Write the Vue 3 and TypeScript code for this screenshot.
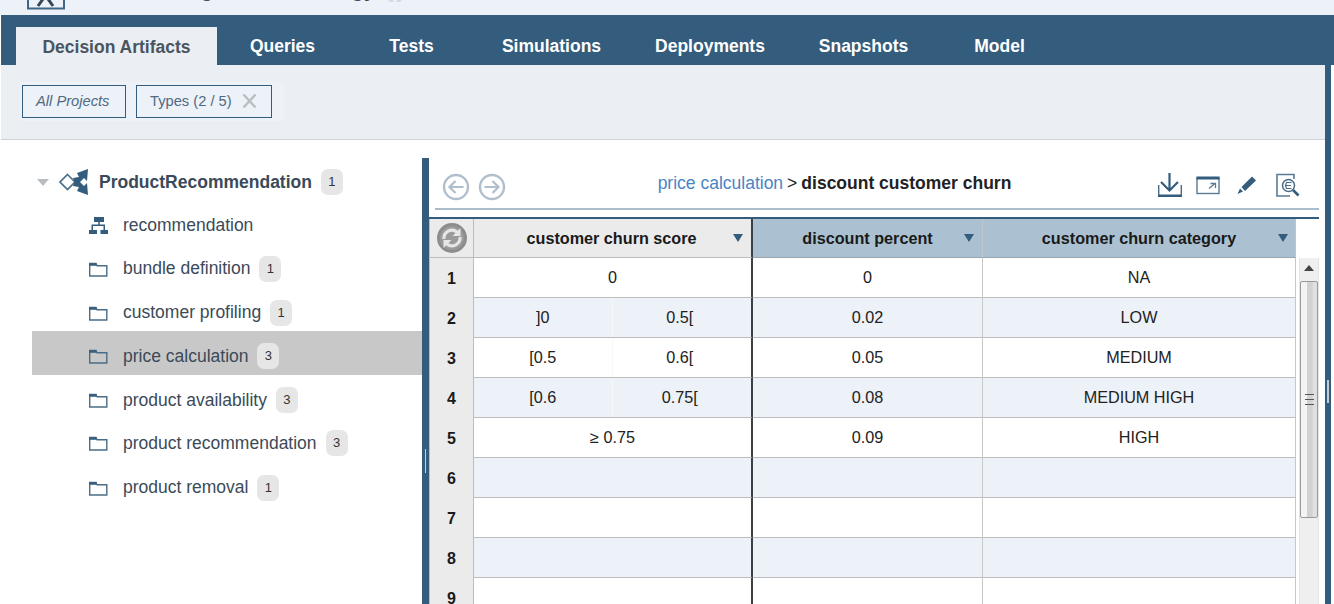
<script setup lang="ts">
interface TreeItem {
  name: string
  icon: 'tree' | 'folder'
  count?: number
  selected?: boolean
}

interface Row {
  id: number
  churn?: string
  low?: string
  high?: string
  discount?: string
  category?: string
}

const tabs = [
  { label: 'Queries', width: 131 },
  { label: 'Tests', width: 127 },
  { label: 'Simulations', width: 153 },
  { label: 'Deployments', width: 164 },
  { label: 'Snapshots', width: 143 },
  { label: 'Model', width: 129 },
]

const items: TreeItem[] = [
  { name: 'recommendation', icon: 'tree' },
  { name: 'bundle definition', icon: 'folder', count: 1 },
  { name: 'customer profiling', icon: 'folder', count: 1 },
  { name: 'price calculation', icon: 'folder', count: 3, selected: true },
  { name: 'product availability', icon: 'folder', count: 3 },
  { name: 'product recommendation', icon: 'folder', count: 3 },
  { name: 'product removal', icon: 'folder', count: 1 },
]

const rows: Row[] = [
  { id: 1, churn: '0', discount: '0', category: 'NA' },
  { id: 2, low: ']0', high: '0.5[', discount: '0.02', category: 'LOW' },
  { id: 3, low: '[0.5', high: '0.6[', discount: '0.05', category: 'MEDIUM' },
  { id: 4, low: '[0.6', high: '0.75[', discount: '0.08', category: 'MEDIUM HIGH' },
  { id: 5, churn: '≥ 0.75', discount: '0.09', category: 'HIGH' },
  { id: 6 },
  { id: 7 },
  { id: 8 },
  { id: 9 },
]
</script>

<template>
  <div class="page">
    <div class="title-strip">
      <svg class="logo" width="38" height="10" viewBox="0 0 38 10">
        <rect x="1" y="-10" width="36" height="18.500" fill="none" stroke="#3f6785" stroke-width="2" />
        <path d="M16 -1l-5 7M21 -1l5 7" fill="none" stroke="#33465a" stroke-width="3" />
      </svg>
      <span class="title">Marketing Bundle Strategy</span>
      <svg class="star" width="14" height="3" viewBox="0 0 14 3">
        <path d="M0 0h5l1 2H2zM9 0h5l-2 2H8z" fill="#d5dae0" />
      </svg>
    </div>

    <nav class="tabs">
      <div class="tab tab--active">Decision Artifacts</div>
      <div v-for="tab in tabs" :key="tab.label" class="tab" :style="{ width: tab.width + 'px' }">
        {{ tab.label }}
      </div>
    </nav>

    <div class="shell">
      <div class="filters">
        <div class="chip-bar">
          <button class="chip chip--italic" type="button">All Projects</button>
          <button class="chip" type="button">
            Types (2 / 5)
            <svg width="15" height="14" viewBox="0 0 15 14">
              <path d="M1.500 0.500l12 13M13.500 0.500l-12 13" stroke="#b9bec3" stroke-width="2.400" />
            </svg>
          </button>
        </div>
      </div>

      <main class="main">
        <aside class="tree">
          <div class="project">
            <span class="caret"></span>
            <svg width="30" height="28" viewBox="0 0 30 28">
              <path d="M8.500 6.500l7.500 7.500-7.500 7.500L1 14z" fill="none" stroke="#4d7188" stroke-width="1.700" />
              <path d="M14 10l6-1-2-4 11-4-1 12-3-3-5 5h-4z" fill="#335c7d" />
              <path d="M14 18l6 1-2 4 11 4-1-12-3 3-5-5h-4z" fill="#335c7d" />
            </svg>
            <strong>ProductRecommendation</strong>
            <span class="badge">1</span>
          </div>
          <div
            v-for="item in items"
            :key="item.name"
            class="item"
            :class="{ 'item--selected': item.selected }"
          >
            <svg v-if="item.icon === 'tree'" width="20" height="18" viewBox="0 0 20 18">
              <path d="M6 1h10v5h-4.200v2.500H17V14h-1.500v-4H5v4H3.500V8.500h6.800V6H6zM1 14h8v4H1zM12.500 14H20v4h-7.500z" fill="#335c7d" />
            </svg>
            <svg v-else width="20" height="18" viewBox="0 0 20 18">
              <path d="M1.700 3.500V16H18.800V5.800H9L8 3.500z" fill="none" stroke="#4a6c86" stroke-width="1.400" />
              <path d="M1 3.200h7.500v2.600H1z" fill="#3a5f7c" />
            </svg>
            <span class="item__name">{{ item.name }}</span>
            <span v-if="item.count" class="badge">{{ item.count }}</span>
          </div>
        </aside>

        <section class="detail">
          <span class="grip"></span>
          <header class="toolbar">
            <div class="nav-buttons">
              <svg width="28" height="28" viewBox="0 0 28 28">
                <circle cx="14" cy="14" r="12" fill="none" stroke="#b0bfcb" stroke-width="2.400" />
                <path d="M21.500 14H8M13.500 8l-6 6 6 6" fill="none" stroke="#b0bfcb" stroke-width="2.200" />
              </svg>
              <svg width="28" height="28" viewBox="0 0 28 28">
                <circle cx="14" cy="14" r="12" fill="none" stroke="#b0bfcb" stroke-width="2.400" />
                <path d="M6.500 14H20M14.500 8l6 6-6 6" fill="none" stroke="#b0bfcb" stroke-width="2.200" />
              </svg>
            </div>
            <div class="crumbs">
              <span class="crumbs__link">price calculation</span>
              <span>&gt;</span>
              <strong>discount customer churn</strong>
            </div>
            <div class="actions">
              <svg width="26" height="26" viewBox="0 0 26 26">
                <path d="M12.500 1v17M4 10l8.500 8.500L21 10" fill="none" stroke="#335c7d" stroke-width="2.200" />
                <path d="M1.700 13v10M24.300 13v10" fill="none" stroke="#4a6c86" stroke-width="1.400" />
                <path d="M1 22.500h24V25H1z" fill="#335c7d" />
              </svg>
              <svg width="24" height="20" viewBox="0 0 24 20">
                <rect x="1" y="3" width="22" height="15.500" fill="none" stroke="#5a7b95" stroke-width="1.400" />
                <rect x="0.500" y="1.500" width="23" height="3" fill="#335c7d" />
                <path d="M13 13.500l6-5M14.500 8.500H19.500v4.500" fill="none" stroke="#5a7b95" stroke-width="1.300" />
              </svg>
              <svg class="actions__pencil" width="22" height="22" viewBox="0 0 22 22">
                <path d="M5.500 13L16 2.500l4 4L9 17zM4 14.500l3 3-5.500 2.500z" fill="#335c7d" />
              </svg>
              <svg class="actions__doc" width="24" height="24" viewBox="0 0 24 24">
                <path d="M18 6V1.500H1V23h13" fill="none" stroke="#5a7b95" stroke-width="1.600" />
                <circle cx="12.500" cy="12.500" r="6" fill="#fff" stroke="#4a6c86" stroke-width="1.500" />
                <path d="M15.500 9.500h-5l-1 3 1 3h5M10 12.500h5" fill="none" stroke="#4a6c86" stroke-width="1.200" />
                <path d="M17 17l5.500 5.500" stroke="#335c7d" stroke-width="2.600" />
              </svg>
            </div>
          </header>

          <div class="table-area">
            <div class="table">
              <div class="head head--corner">
                <svg width="30" height="30" viewBox="0 0 30 30">
                  <circle cx="15" cy="15" r="15" fill="#8c8c8c" />
                  <circle cx="15" cy="15" r="12" fill="#9b9b9b" />
                  <path d="M7 16a8 8 0 0 1 13-7" fill="none" stroke="#e6e6e6" stroke-width="3.200" />
                  <path d="M23 14a8 8 0 0 1-13 7" fill="none" stroke="#e6e6e6" stroke-width="3.200" />
                  <path d="M23.500 5v8h-8zM6.500 25v-8h8z" fill="#e6e6e6" />
                </svg>
              </div>
              <div class="head head--grey">customer churn score<span class="sort"></span></div>
              <div class="head head--blue">discount percent<span class="sort"></span></div>
              <div class="head head--blue head--last">customer churn category<span class="sort"></span></div>

              <template v-for="row in rows" :key="row.id">
                <div class="num">{{ row.id }}</div>
                <div class="cell cell--score" :class="{ 'cell--even': row.id % 2 === 0 }">
                  <template v-if="row.low">
                    <span class="range range--low">{{ row.low }}</span>
                    <span class="range range--high">{{ row.high }}</span>
                  </template>
                  <span v-else>{{ row.churn }}</span>
                </div>
                <div class="cell" :class="{ 'cell--even': row.id % 2 === 0 }">{{ row.discount }}</div>
                <div class="cell" :class="{ 'cell--even': row.id % 2 === 0 }">{{ row.category }}</div>
              </template>
            </div>

            <div class="scrollbar">
              <span class="scrollbar__arrow"></span>
              <div class="scrollbar__thumb"><span class="scrollbar__lines"></span></div>
            </div>
          </div>
        </section>
      </main>
      <span class="shell__grip"></span>
    </div>
  </div>
</template>

<style>
html,
body {
  margin: 0;
  overflow: hidden;
  background: #fff;
}
</style>

<style scoped>
.page {
  width: 1334px;
  height: 604px;
  overflow: hidden;
  display: flex;
  flex-direction: column;
  font-family: 'Liberation Sans', Arial, sans-serif;
  font-size: 16px;
  color: #3b4a58;
}

.title-strip {
  flex: 0 0 15px;
  display: flex;
  align-items: flex-start;
  padding-left: 27px;
  background: #edf1f8;
  overflow: hidden;
}

.logo {
  flex: none;
}

.title {
  margin: -20px 0 0 52px;
  line-height: 20px;
  font-size: 20.400px;
  font-weight: 700;
  color: #3b4a58;
  white-space: nowrap;
}

.star {
  margin-left: 13px;
}

.tabs {
  flex: 0 0 50px;
  box-sizing: border-box;
  display: flex;
  align-items: flex-end;
  margin-left: 1px;
  padding-left: 15px;
  background: #335c7d;
}

.tab {
  height: 38px;
  line-height: 38px;
  font-size: 17.500px;
  font-weight: 700;
  color: #fff;
  text-align: center;
}

.tab--active {
  width: 201px;
  box-sizing: border-box;
  padding-top: 1px;
  background: #ebeef2;
  color: #4a5560;
}

.shell {
  position: relative;
  flex: 1;
  min-height: 0;
  width: 1331px;
  box-sizing: border-box;
  border-right: 6px solid #335c7d;
  display: flex;
  flex-direction: column;
}

.shell__grip {
  position: absolute;
  right: -4px;
  top: 315px;
  width: 2px;
  height: 23px;
  background: #c3cdd6;
}

.filters {
  flex: 0 0 75px;
  box-sizing: border-box;
  display: flex;
  align-items: flex-start;
  margin-left: 1px;
  padding: 17px 0 0 19px;
  background: #ebeef2;
  border-bottom: 1px solid #cfd2d4;
}

.chip-bar {
  display: flex;
  gap: 10px;
  padding: 3px 12px 3px 2px;
  background: #edf1f8;
}

.chip {
  height: 33px;
  box-sizing: border-box;
  display: flex;
  align-items: center;
  gap: 10px;
  padding: 0 14px 2px 13px;
  border: 1px solid #335c7d;
  background: #edf1f8;
  font: 14.700px 'Liberation Sans', Arial, sans-serif;
  color: #4f6a83;
}

.chip--italic {
  width: 104px;
  font-style: italic;
}

.main {
  flex: 1;
  min-height: 0;
  display: flex;
  background: #fff;
}

.tree {
  flex: 0 0 422px;
  box-sizing: border-box;
  padding: 20px 0 0 32px;
}

.project {
  height: 44px;
  margin-bottom: -4px;
  display: flex;
  align-items: center;
  font-size: 17.500px;
  padding-left: 5px;
}

.project strong {
  margin-left: 10px;
  color: #3b4a58;
}

.project .badge {
  margin-left: 9px;
}

.caret {
  width: 0;
  height: 0;
  margin-right: 10px;
  border-left: 6px solid transparent;
  border-right: 6px solid transparent;
  border-top: 7px solid #b9bdc0;
}

.item {
  height: 44px;
  box-sizing: border-box;
  display: flex;
  align-items: center;
  padding: 6px 0 0 56px;
  margin-bottom: -0.200px;
}

/* "product recommendation" sits a pixel higher than the even row rhythm */
.item:nth-child(7) {
  padding-bottom: 2px;
}

.item--selected {
  background: #c8c8c8;
}

.item__name {
  margin-left: 15px;
  font-size: 17.500px;
  color: #3b4a58;
}

.badge {
  min-width: 22px;
  height: 26px;
  box-sizing: border-box;
  margin-left: 9px;
  border-radius: 7px;
  background: #e6e6e6;
  font-size: 13px;
  line-height: 26px;
  text-align: center;
  color: #333;
}

.detail {
  position: relative;
  flex: 1;
  min-width: 0;
  display: flex;
  flex-direction: column;
  margin-top: 18px;
  border-left: 7px solid #335c7d;
}

.grip {
  position: absolute;
  left: -4px;
  top: 291px;
  width: 1px;
  height: 24px;
  background: #c3d0da;
}

.toolbar {
  flex: 0 0 52px;
  box-sizing: border-box;
  display: grid;
  grid-template-columns: 100px 1fr 173px;
  align-items: center;
  margin: 0 6px 0 6px;
  padding: 0 19px 0 7px;
  border-bottom: 2px solid #a9bdcd;
}

.nav-buttons {
  display: flex;
  gap: 8px;
  padding-top: 8px;
}

.crumbs {
  display: flex;
  justify-content: center;
  gap: 4px;
  font-size: 17.500px;
  color: #222;
}

.crumbs__link {
  color: #4a84c4;
}

.crumbs strong {
  color: #222;
}

.actions {
  display: flex;
  justify-content: flex-end;
  align-items: center;
  gap: 13px;
  padding-top: 3px;
}

.actions__pencil {
  margin-left: 3px;
}

.actions__doc {
  margin-left: 5px;
}

.table-area {
  flex: 1;
  min-height: 0;
  display: flex;
  margin: 7px 6px 0 0;
  border-top: 2px solid #335c7d;
}

.table {
  flex: 0 0 867px;
  display: grid;
  grid-template-columns: 45px 279px 230px 313px;
  grid-template-rows: 39px;
  grid-auto-rows: 40px;
  align-content: start;
  overflow: hidden;
}

.head {
  position: relative;
  display: flex;
  align-items: center;
  justify-content: center;
  box-sizing: border-box;
  font-size: 16.200px;
  font-weight: 700;
  color: #1a1a1a;
  border-bottom: 1px solid #bcbcbc;
}

.head--corner,
.head--grey {
  background: #ebebeb;
}

.head--corner {
  border-left: 1px solid #bcbcbc;
  border-right: 1px solid #bcbcbc;
}

.head--grey {
  padding-right: 2px;
  border-right: 2px solid #3a3f44;
}

.head--blue {
  background: #abc1d1;
  border-right: 1px solid #bcc8d0;
  border-bottom-color: #9aa5ad;
}

.sort {
  position: absolute;
  right: 8px;
  top: 15px;
  width: 0;
  height: 0;
  border-left: 5px solid transparent;
  border-right: 5px solid transparent;
  border-top: 8px solid #335c7d;
}

.head--last .sort {
  right: 7px;
}

.num {
  display: flex;
  align-items: center;
  justify-content: center;
  box-sizing: border-box;
  padding-top: 2px;
  background: #ebebeb;
  border-left: 1px solid #bcbcbc;
  border-right: 1px solid #bcbcbc;
  font-size: 16px;
  font-weight: 700;
  color: #1a1a1a;
}

.cell {
  display: flex;
  align-items: center;
  justify-content: center;
  box-sizing: border-box;
  border-right: 1px solid #c8c8c8;
  border-bottom: 1px solid #bcbcbc;
  font-size: 16.200px;
  color: #222;
  background: #fff;
}

.cell--even {
  background: #edf1f8;
}

.cell--score {
  border-right: 2px solid #3a3f44;
}

.range {
  flex: 0 0 50%;
  height: 100%;
  display: flex;
  align-items: center;
  justify-content: center;
  box-sizing: border-box;
}

.range--low {
  border-right: 1px solid #f6f7f9;
}

.range--high {
  padding-right: 4px;
}

.scrollbar {
  flex: 0 0 20px;
  margin: 39px 0 0 3px;
  background: #efefef;
  border-left: 1px solid #e6e6e6;
  border-right: 1px solid #e6e6e6;
  box-sizing: border-box;
}

.scrollbar__arrow {
  display: block;
  width: 0;
  height: 0;
  margin: 7px auto 10px;
  border-left: 5px solid transparent;
  border-right: 5px solid transparent;
  border-bottom: 6px solid #444;
}

.scrollbar__thumb {
  height: 237px;
  box-sizing: border-box;
  display: flex;
  align-items: center;
  justify-content: center;
  border: 1px solid #999;
  border-radius: 2px;
  background: linear-gradient(90deg, #f4f4f4 0%, #f4f4f4 35%, #d2d2d2 40%, #d2d2d2 70%, #e0e0e0 75%, #e0e0e0 100%);
}

.scrollbar__lines {
  width: 9px;
  height: 9px;
  border-top: 1px solid #555;
  border-bottom: 1px solid #555;
  background: linear-gradient(#555, #555) center / 100% 1px no-repeat;
}
</style>
